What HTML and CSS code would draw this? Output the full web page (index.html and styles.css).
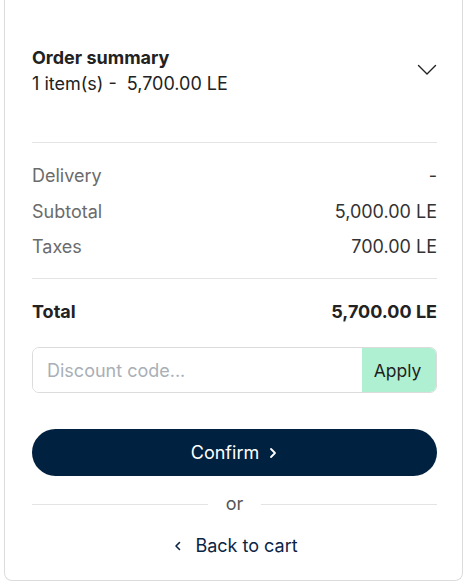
FILE: index.html
```html
<!DOCTYPE html>
<html>
<head>
<meta charset="utf-8">
<link rel="stylesheet" href="styles.css">
</head>
<body>
<div class="card">
  <div class="summary-head">
    <div class="summary-text">
      <div class="title">Order summary</div>
      <div class="subtitle">1 item(s) - &nbsp;5,700.00 LE</div>
    </div>
    <svg class="chev" width="20" height="12" viewBox="0 0 20 12"><path d="M1.5 1.5 L10 10 L18.5 1.5" fill="none" stroke="#222" stroke-width="1.4" stroke-linecap="round" stroke-linejoin="round"/></svg>
  </div>
  <div class="divider"></div>
  <div class="rows">
    <div class="row"><span class="label">Delivery</span><span class="value">-</span></div>
    <div class="row"><span class="label">Subtotal</span><span class="value">5,000.00 LE</span></div>
    <div class="row"><span class="label">Taxes</span><span class="value">700.00 LE</span></div>
  </div>
  <div class="divider"></div>
  <div class="row total"><span>Total</span><span>5,700.00 LE</span></div>
  <div class="discount">
    <input class="discount-input" type="text" placeholder="Discount code...">
    <button class="apply">Apply</button>
  </div>
  <button class="confirm">Confirm <svg width="10" height="12" viewBox="0 0 10 12"><path d="M3 2 L7 6 L3 10" fill="none" stroke="#fff" stroke-width="1.8" stroke-linecap="round" stroke-linejoin="round"/></svg></button>
  <div class="or"><span class="line"></span><span class="or-text">or</span><span class="line"></span></div>
  <div class="back"><svg width="10" height="12" viewBox="0 0 10 12"><path d="M6.5 2.5 L3 6 L6.5 9.5" fill="none" stroke="#0b2545" stroke-width="1.6" stroke-linecap="round" stroke-linejoin="round"/></svg><span>Back to cart</span></div>
</div>
</body>
</html>
```

FILE: styles.css
```css
html, body {
  margin: 0;
  padding: 0;
  background: #fff;
}
body {
  font-family: Inter, "Liberation Sans", sans-serif;
  color: #222;
}
.card {
  margin-left: 4px;
  width: 459px;
  box-sizing: border-box;
  border: 1px solid #dcdcdc;
  border-top: none;
  border-radius: 0 0 8px 8px;
  padding: 45px 25px 23px 27px;
  height: 581px;
}
.summary-head {
  display: flex;
  align-items: center;
  justify-content: space-between;
}
.title {
  font-size: 18px;
  font-weight: 700;
  line-height: 26px;
  color: #222;
}
.subtitle {
  font-size: 18px;
  line-height: 26px;
  color: #222;
}
.chev {
  margin-right: 0;
  margin-top: -2px;
}
.divider {
  height: 1px;
  background: #e3e3e3;
}
.summary-head + .divider {
  margin-top: 45px;
}
.rows {
  padding: 21px 0 19px;
  display: flex;
  flex-direction: column;
  gap: 11.5px;
}
.row {
  display: flex;
  justify-content: space-between;
  font-size: 18px;
  line-height: 24px;
}
.label {
  color: #6b6b6b;
}
.value {
  color: #333;
}
.total {
  font-weight: 700;
  color: #222;
  margin-top: 21px;
}
.discount {
  margin-top: 23px;
  display: flex;
  height: 46px;
  border: 1px solid #dcdcdc;
  border-radius: 7px;
  overflow: hidden;
  box-sizing: border-box;
}
.discount-input {
  flex: 1;
  border: none;
  outline: none;
  font-family: inherit;
  font-size: 18px;
  padding: 0 0 0 14px;
  color: #222;
  min-width: 0;
}
.discount-input::placeholder {
  color: #a9afb7;
}
.apply {
  width: 75px;
  border: none;
  background: #aff0d2;
  font-family: inherit;
  font-size: 17.5px;
  color: #1f1f1f;
  padding: 0 4px 0 0;
  margin: -1px -1px -1px 0;
  text-align: center;
}
.confirm {
  margin-top: 36px;
  width: 100%;
  height: 47px;
  border: none;
  border-radius: 24px;
  background: #00213f;
  color: #fff;
  font-family: inherit;
  font-size: 18px;
  display: flex;
  align-items: center;
  justify-content: center;
  gap: 9px;
}
.or {
  margin-top: 17px;
  display: flex;
  align-items: center;
  gap: 0;
}
.line {
  flex: 1;
  height: 1px;
  background: #e3e3e3;
}
.or-text {
  width: 53px;
  text-align: center;
  font-size: 18px;
  line-height: 22px;
  color: #555;
}
.back {
  margin-top: 19px;
  display: flex;
  align-items: center;
  justify-content: center;
  gap: 12px;
  font-size: 18px;
  line-height: 24px;
  color: #0b2545;
  padding-left: 2px;
}
```
